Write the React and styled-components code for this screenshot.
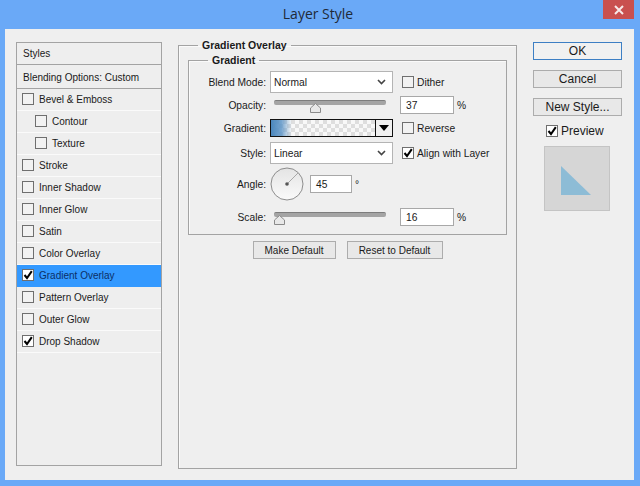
import styled, { createGlobalStyle } from "styled-components";

const GlobalStyle = createGlobalStyle`
  html, body {
    margin: 0;
    padding: 0;
    background: #6aa9f7;
  }
  * {
    box-sizing: border-box;
  }
`;

const Frame = styled.div`
  width: 640px;
  height: 486px;
  display: flex;
  flex-direction: column;
  background: #6aa9f7;
  font-family: "Liberation Sans", Arial, sans-serif;
  font-size: 10.25px;
  color: #1a1a1a;
  overflow: hidden;
`;

const TitleBar = styled.div`
  height: 29px;
  flex: none;
  display: grid;
  grid-template-columns: 1fr auto 1fr;
  align-items: start;
`;

const Title = styled.div`
  grid-column: 2;
  padding-right: 4px;
  font-family: "Open Sans", "Noto Sans", sans-serif;
  font-size: 14px;
  line-height: 28px;
  color: #1f2a38;
`;

const CloseButton = styled.div`
  grid-column: 3;
  justify-self: end;
  width: 31px;
  height: 19px;
  margin-right: 6px;
  background: #c9504f;
  display: flex;
  align-items: center;
  justify-content: center;
`;

const Client = styled.div`
  flex: 1;
  margin: 0 6px 6px 5px;
  padding: 13px 0 0 11px;
  background: #efefef;
  display: flex;
  align-items: flex-start;
`;

const Sidebar = styled.div`
  width: 146px;
  height: 424px;
  flex: none;
  background: #eeeeee;
  border: 1px solid #a3a3a3;
  font-size: 10px;
`;

const SidebarHead = styled.div`
  height: ${(p) => p.$h}px;
  padding-left: 6px;
  display: flex;
  align-items: center;
  border-bottom: 1px solid #a3a3a3;
  margin-bottom: ${(p) => p.$gap}px;
`;

const SidebarRow = styled.div`
  height: 22px;
  padding-bottom: 1px;
  display: flex;
  align-items: center;
  gap: 5px;
  padding-left: ${(p) => (p.$sub ? 18 : 5)}px;
  background: ${(p) => (p.$active ? "#3399ff" : "transparent")};
  color: ${(p) => (p.$active ? "#0b2f66" : "#1a1a1a")};
  border-bottom: 1px solid ${(p) => (p.$active ? "#3399ff" : "#fafafa")};
`;

const Box = styled.span`
  width: 12px;
  height: 12px;
  flex: none;
  background: ${(p) => (p.$checked ? "#ffffff" : "#f2f2f2")};
  border: 1px solid #6f6f6f;
  display: inline-flex;
  align-items: center;
  justify-content: center;
`;

const Group = styled.fieldset`
  margin: 0;
  min-width: 0;
  border: 1px solid #a3a3a3;
  box-shadow: inset 1px 1px 0 #fafafa;
`;

const OuterGroup = styled(Group)`
  width: 339px;
  height: 431px;
  margin-left: 16px;
  margin-top: -4px;
  padding: 0 9px;
`;

const InnerGroup = styled(Group)`
  height: 182px;
  margin-top: 1px;
  padding: 0;
`;

const Legend = styled.legend`
  margin-left: ${(p) => p.$ml}px;
  padding: 0 4px;
  font-size: 10.5px;
  font-weight: 700;
  line-height: 14px;
`;

const FormRow = styled.div`
  height: ${(p) => p.$h}px;
  margin-top: ${(p) => p.$mt || 0}px;
  display: flex;
  align-items: center;
`;

const Label = styled.div`
  width: 78px;
  flex: none;
  text-align: right;
  padding-right: 1px;
`;

const Select = styled.div`
  width: 123px;
  height: 22px;
  margin-left: 3px;
  padding: 0 6px 0 3px;
  flex: none;
  background: #ffffff;
  border: 1px solid #b4b4b4;
  display: flex;
  align-items: center;
  justify-content: space-between;
`;

const CheckLabel = styled.label`
  margin-left: ${(p) => p.$ml}px;
  display: flex;
  align-items: center;
  gap: 3px;
`;

const Track = styled.div`
  width: 112px;
  margin-left: 7px;
  flex: none;
  position: relative;
  height: 18px;
  &::before {
    content: "";
    position: absolute;
    left: 0;
    right: 0;
    top: 4px;
    height: 4px;
    border-radius: 2px;
    background: #a4a4a4;
    border-top: 1px solid #7d7d7d;
  }
`;

const Thumb = styled.svg`
  position: absolute;
  top: 7px;
`;

const NumberInput = styled.div`
  width: ${(p) => p.$w}px;
  height: 18px;
  margin-left: ${(p) => p.$ml}px;
  padding-left: 5px;
  flex: none;
  background: #ffffff;
  border: 1px solid #a8a8a8;
  display: flex;
  align-items: center;
`;

const Unit = styled.span`
  margin-left: 3px;
`;

const GradientPicker = styled.div`
  width: 123px;
  height: 18px;
  margin-left: 3px;
  flex: none;
  display: flex;
  border: 1px solid #111111;
`;

const GradientSwatch = styled.div`
  flex: 1;
  border-right: 1px solid #111111;
  background:
    linear-gradient(90deg, #4b87bd 0%, rgba(95, 150, 200, 0.85) 10%, rgba(255, 255, 255, 0) 20%),
    repeating-conic-gradient(#dedede 0 25%, #f8f8f8 0 50%) 0 0 / 8px 8px;
`;

const GradientArrow = styled.div`
  width: 16px;
  flex: none;
  background: #f0f0f0;
  display: flex;
  align-items: center;
  justify-content: center;
`;

const DefaultButtons = styled.div`
  display: flex;
  justify-content: center;
  gap: 11px;
  margin-top: 6px;
`;

const Button = styled.div`
  width: ${(p) => p.$w || 89}px;
  height: 18px;
  flex: none;
  background: ${(p) => (p.$primary ? "#f1f1f1" : "#e8e8e8")};
  border: 1px solid ${(p) => (p.$primary ? "#3d7fc4" : "#acacac")};
  font-size: ${(p) => p.$size || 10}px;
  display: flex;
  align-items: center;
  justify-content: center;
`;

const RightColumn = styled.div`
  width: 90px;
  margin-left: 16px;
  flex: none;
  display: flex;
  flex-direction: column;
  gap: 10px;
`;

const PreviewToggle = styled.label`
  height: 12px;
  margin: -1px 0 0 13px;
  display: flex;
  align-items: center;
  gap: 3px;
  font-size: 12px;
`;

const PreviewBox = styled.div`
  width: 66px;
  height: 65px;
  margin: -1px 0 0 11px;
  padding: 19px 0 0 16px;
  background: #d6d6d6;
  border: 1px solid #c4c4c4;
`;

const Check = () => (
  <svg width="10" height="10" viewBox="0 0 10 10">
    <path d="M1.5 5 L4 8 L8.8 1.2" fill="none" stroke="#000" strokeWidth="2" />
  </svg>
);

const Chevron = () => (
  <svg width="9" height="6" viewBox="0 0 9 6">
    <path d="M1 1 L4.5 4.5 L8 1" fill="none" stroke="#444" strokeWidth="1.6" />
  </svg>
);

const SliderThumb = ({ left }) => (
  <Thumb style={{ left }} width="11" height="10" viewBox="0 0 11 10">
    <path d="M5.5 0.5 L10.5 5 V9.5 H0.5 V5 Z" fill="#e8e8e8" stroke="#8a8a8a" />
  </Thumb>
);

const rows = [
  { name: "Bevel & Emboss" },
  { name: "Contour", sub: true },
  { name: "Texture", sub: true },
  { name: "Stroke" },
  { name: "Inner Shadow" },
  { name: "Inner Glow" },
  { name: "Satin" },
  { name: "Color Overlay" },
  { name: "Gradient Overlay", checked: true, active: true },
  { name: "Pattern Overlay" },
  { name: "Outer Glow" },
  { name: "Drop Shadow", checked: true },
];

export default function App() {
  return (
    <Frame>
      <GlobalStyle />
      <TitleBar>
        <Title>Layer Style</Title>
        <CloseButton>
          <svg width="10" height="10" viewBox="0 0 10 10">
            <path d="M1 1 L9 9 M9 1 L1 9" stroke="#f7e9e9" strokeWidth="2" />
          </svg>
        </CloseButton>
      </TitleBar>
      <Client>
        <Sidebar>
          <SidebarHead $h={22} $gap={1}>Styles</SidebarHead>
          <SidebarHead $h={23} $gap={0}>Blending Options: Custom</SidebarHead>
          {rows.map((r) => (
            <SidebarRow key={r.name} $sub={r.sub} $active={r.active}>
              <Box $checked={r.checked}>{r.checked && <Check />}</Box>
              {r.name}
            </SidebarRow>
          ))}
        </Sidebar>

        <OuterGroup>
          <Legend $ml={10}>Gradient Overlay</Legend>
          <InnerGroup>
            <Legend $ml={19}>Gradient</Legend>
            <FormRow $h={22} $mt={4}>
              <Label>Blend Mode:</Label>
              <Select>Normal<Chevron /></Select>
              <CheckLabel $ml={9}><Box />Dither</CheckLabel>
            </FormRow>
            <FormRow $h={18} $mt={3}>
              <Label>Opacity:</Label>
              <Track><SliderThumb left={36} /></Track>
              <NumberInput $w={54} $ml={14}>37</NumberInput>
              <Unit>%</Unit>
            </FormRow>
            <FormRow $h={18} $mt={5}>
              <Label>Gradient:</Label>
              <GradientPicker>
                <GradientSwatch />
                <GradientArrow>
                  <svg width="10" height="6" viewBox="0 0 10 6">
                    <path d="M0 0 H10 L5 6 Z" fill="#000" />
                  </svg>
                </GradientArrow>
              </GradientPicker>
              <CheckLabel $ml={9}><Box />Reverse</CheckLabel>
            </FormRow>
            <FormRow $h={22} $mt={5}>
              <Label>Style:</Label>
              <Select>Linear<Chevron /></Select>
              <CheckLabel $ml={9}><Box $checked><Check /></Box>Align with Layer</CheckLabel>
            </FormRow>
            <FormRow $h={34} $mt={3}>
              <Label>Angle:</Label>
              <svg width="34" height="34" viewBox="0 0 34 34" style={{ marginLeft: 3 }}>
                <defs>
                  <linearGradient id="dial" x1="0" y1="0" x2="0" y2="1">
                    <stop offset="0" stopColor="#e4e4e4" />
                    <stop offset="1" stopColor="#fafafa" />
                  </linearGradient>
                </defs>
                <circle cx="17" cy="17" r="16" fill="url(#dial)" stroke="#8d8d8d" />
                <path d="M17 17 L28 6" stroke="#a8a8a8" />
                <circle cx="17" cy="17" r="1.8" fill="#555" />
              </svg>
              <NumberInput $w={42} $ml={6}>45</NumberInput>
              <Unit>°</Unit>
            </FormRow>
            <FormRow $h={18} $mt={7}>
              <Label>Scale:</Label>
              <Track><SliderThumb left={0} /></Track>
              <NumberInput $w={54} $ml={14}>16</NumberInput>
              <Unit>%</Unit>
            </FormRow>
          </InnerGroup>
          <DefaultButtons>
            <Button $w={83}>Make Default</Button>
            <Button $w={96}>Reset to Default</Button>
          </DefaultButtons>
        </OuterGroup>

        <RightColumn>
          <Button $primary $size={12}>OK</Button>
          <Button $size={12}>Cancel</Button>
          <Button $size={12}>New Style...</Button>
          <PreviewToggle><Box $checked><Check /></Box>Preview</PreviewToggle>
          <PreviewBox>
            <svg width="30" height="30" viewBox="0 0 30 30">
              <path d="M0 0 L30 29 H0 Z" fill="#8dbcd6" />
            </svg>
          </PreviewBox>
        </RightColumn>
      </Client>
    </Frame>
  );
}
